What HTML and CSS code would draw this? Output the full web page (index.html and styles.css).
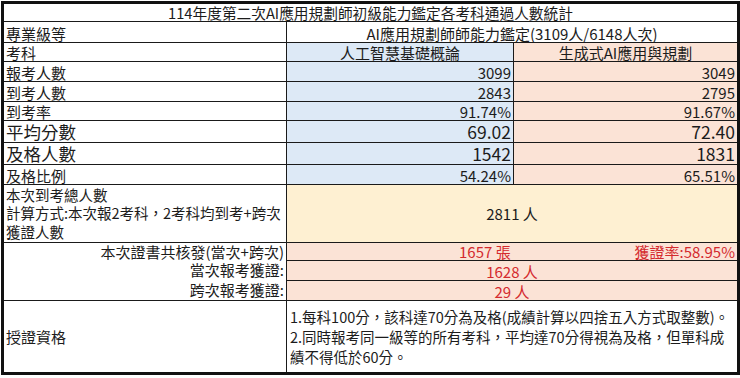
FILE: index.html
```html
<!DOCTYPE html>
<html lang="zh-TW">
<head>
  <meta charset="UTF-8" />
  <meta name="viewport" content="width=device-width, initial-scale=1.0" />
  <title>114年度第二次AI應用規劃師初級能力鑑定</title>
  <link rel="stylesheet" href="styles.css">
</head>
<body>
  <table class="stats">
    <colgroup>
      <col class="col-label">
      <col class="col-a">
      <col class="col-b">
    </colgroup>
    <tr class="h18">
      <td colspan="3" class="center title">114年度第二次AI應用規劃師初級能力鑑定各考科通過人數統計</td>
    </tr>
    <tr class="h21">
      <td>專業級等</td>
      <td colspan="2" class="center">AI應用規劃師師能力鑑定(3109人/6148人次)</td>
    </tr>
    <tr class="h19">
      <td>考科</td>
      <td class="blue center">人工智慧基礎概論</td>
      <td class="peach center">生成式AI應用與規劃</td>
    </tr>
    <tr class="h20">
      <td>報考人數</td>
      <td class="blue num">3099</td>
      <td class="peach num">3049</td>
    </tr>
    <tr class="h20">
      <td>到考人數</td>
      <td class="blue num">2843</td>
      <td class="peach num">2795</td>
    </tr>
    <tr class="h19">
      <td>到考率</td>
      <td class="blue num">91.74%</td>
      <td class="peach num">91.67%</td>
    </tr>
    <tr class="h22 big">
      <td>平均分數</td>
      <td class="blue num">69.02</td>
      <td class="peach num">72.40</td>
    </tr>
    <tr class="h22 big">
      <td>及格人數</td>
      <td class="blue num">1542</td>
      <td class="peach num">1831</td>
    </tr>
    <tr class="h20">
      <td>及格比例</td>
      <td class="blue num">54.24%</td>
      <td class="peach num">65.51%</td>
    </tr>
    <tr class="h58">
      <td class="multi total-label">本次到考總人數<br>計算方式:本次報2考科，2考科均到考+跨次<br>獲證人數</td>
      <td colspan="2" class="yellow center mid">2811 人</td>
    </tr>
    <tr class="h18">
      <td rowspan="3" class="cert-labels">
        <div class="cert-line first">本次證書共核發(當次+跨次)</div>
        <div class="cert-line">當次報考獲證:</div>
        <div class="cert-line">跨次報考獲證:</div>
      </td>
      <td colspan="2" class="peach red">
        <div class="split">
          <span class="issued">1657 張</span>
          <span>獲證率:58.95%</span>
        </div>
      </td>
    </tr>
    <tr class="h20">
      <td colspan="2" class="peach red center">1628 人</td>
    </tr>
    <tr class="h20">
      <td colspan="2" class="peach red center">29 人</td>
    </tr>
    <tr class="h73">
      <td class="mid">授證資格</td>
      <td colspan="2" class="multi rules">1.每科100分，該科達70分為及格(成績計算以四捨五入方式取整數)。<br>2.同時報考同一級等的所有考科，平均達70分得視為及格，但單科成<br>績不得低於60分。</td>
    </tr>
  </table>
</body>
</html>
```

FILE: styles.css
```css
* {
  box-sizing: border-box;
}
body {
  margin: 0;
  background: #fff;
  font-family: "Noto Sans CJK TC", "Noto Sans", sans-serif;
  color: #1c1c1c;
}
.stats {
  margin: 1px 0 0 1px;
  width: 736px;
  border-collapse: collapse;
  table-layout: fixed;
  border: 3px solid #111;
  font-size: 15px;
}
.col-label { width: 284px; }
.col-a { width: 227px; }
.col-b { width: 225px; }
.stats td {
  border: 1px solid #1a1a1a;
  padding: 0 2px;
  line-height: 17px;
  vertical-align: bottom;
  white-space: nowrap;
}
.h18 { height: 18px; }
.h19 { height: 19px; }
.h20 { height: 20px; }
.h21 { height: 21px; }
.h22 { height: 22px; }
.h58 { height: 58px; }
.h73 { height: 73px; }
.title {
  font-size: 14.7px;
}
.center { text-align: center; }
.num { text-align: right; }
.stats td.mid { vertical-align: middle; }
.stats .big td {
  font-size: 17.5px;
  line-height: 20px;
  vertical-align: middle;
}
.blue { background: #dde9f6; }
.peach { background: #fbe3d6; }
.yellow { background: #fef0d2; }
.red { color: #d42a2e; }
.stats td.multi {
  line-height: 20px;
  vertical-align: middle;
}
.stats td.total-label {
  font-size: 14.5px;
  line-height: 18.5px;
}
.stats td.rules {
  font-size: 14.5px;
  padding-left: 3px;
}
.stats td.cert-labels {
  text-align: right;
  vertical-align: top;
}
.cert-line {
  height: 20px;
  line-height: 20px;
}
.cert-line.first {
  height: 17px;
  line-height: 17px;
}
.split {
  display: flex;
}
.issued {
  margin-left: 170px;
}
.split span:last-child {
  margin-left: auto;
}
```
